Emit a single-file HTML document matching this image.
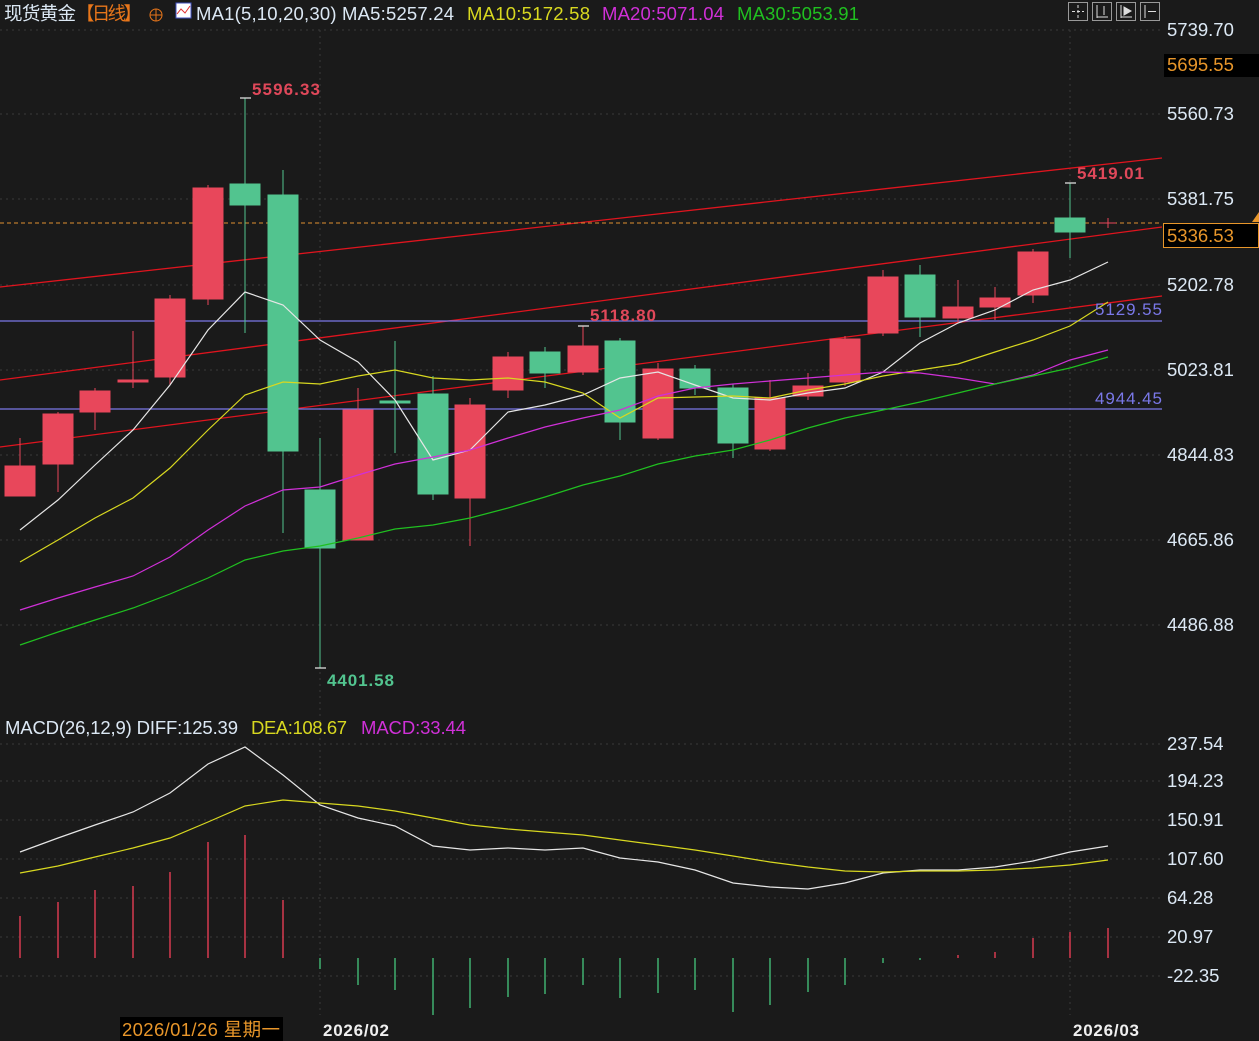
<!DOCTYPE html><html><head><meta charset="utf-8"><style>
html,body{margin:0;padding:0;background:#1a1a1a;width:1259px;height:1041px;overflow:hidden}
svg{display:block}
text{font-family:"Liberation Sans","Noto Sans CJK SC",sans-serif;font-size:18.5px}
</style></head><body>
<svg width="1259" height="1041" viewBox="0 0 1259 1041">
<rect width="1259" height="1041" fill="#1a1a1a"/>
<g stroke="#3a3a3a" stroke-dasharray="2,4" stroke-width="1">
<line x1="0" y1="30" x2="1162" y2="30"/><line x1="0" y1="114" x2="1162" y2="114"/>
<line x1="0" y1="199" x2="1162" y2="199"/><line x1="0" y1="285" x2="1162" y2="285"/>
<line x1="0" y1="370" x2="1162" y2="370"/><line x1="0" y1="455" x2="1162" y2="455"/>
<line x1="0" y1="540" x2="1162" y2="540"/><line x1="0" y1="625" x2="1162" y2="625"/>
<line x1="0" y1="744" x2="1162" y2="744"/><line x1="0" y1="781" x2="1162" y2="781"/>
<line x1="0" y1="820" x2="1162" y2="820"/><line x1="0" y1="859" x2="1162" y2="859"/>
<line x1="0" y1="898" x2="1162" y2="898"/><line x1="0" y1="937" x2="1162" y2="937"/>
<line x1="0" y1="976" x2="1162" y2="976"/>
<line x1="320" y1="30" x2="320" y2="1015"/><line x1="1070" y1="30" x2="1070" y2="1015"/>
</g>
<g stroke="#e0141e" stroke-width="1.3">
<line x1="0" y1="287" x2="1162" y2="158"/>
<line x1="0" y1="380" x2="1162" y2="227"/>
<line x1="0" y1="447" x2="1162" y2="296"/>
</g>
<g stroke="#7a78e8" stroke-width="1.2"><line x1="0" y1="321" x2="1162" y2="321"/><line x1="0" y1="409" x2="1162" y2="409"/></g>
<line x1="0" y1="223" x2="1162" y2="223" stroke="#e09030" stroke-dasharray="4,3" stroke-width="1"/>
<g>
<g stroke="#e8475b" fill="#e8475b">
<line x1="20" y1="438" x2="20" y2="496"/><rect x="5" y="466" width="30" height="30"/>
<line x1="58" y1="412" x2="58" y2="492"/><rect x="43" y="414" width="30" height="50"/>
<line x1="95" y1="388" x2="95" y2="430"/><rect x="80" y="391" width="30" height="21"/>
<line x1="133" y1="331" x2="133" y2="388"/><rect x="118" y="380" width="30" height="2"/>
<line x1="170" y1="295" x2="170" y2="385"/><rect x="155" y="299" width="30" height="78"/>
<line x1="208" y1="185" x2="208" y2="305"/><rect x="193" y="188" width="30" height="111"/>
<line x1="358" y1="388" x2="358" y2="540"/><rect x="343" y="410" width="30" height="130"/>
<line x1="470" y1="398" x2="470" y2="546"/><rect x="455" y="405" width="30" height="93"/>
<line x1="508" y1="352" x2="508" y2="398"/><rect x="493" y="357" width="30" height="33"/>
<line x1="583" y1="326" x2="583" y2="375"/><rect x="568" y="346" width="30" height="26"/>
<line x1="658" y1="363" x2="658" y2="440"/><rect x="643" y="369" width="30" height="69"/>
<line x1="770" y1="380" x2="770" y2="451"/><rect x="755" y="398" width="30" height="51"/>
<line x1="808" y1="373" x2="808" y2="400"/><rect x="793" y="386" width="30" height="10"/>
<line x1="845" y1="336" x2="845" y2="386"/><rect x="830" y="339" width="30" height="43"/>
<line x1="883" y1="270" x2="883" y2="336"/><rect x="868" y="277" width="30" height="56"/>
<line x1="958" y1="280" x2="958" y2="322"/><rect x="943" y="307" width="30" height="11"/>
<line x1="995" y1="287" x2="995" y2="320"/><rect x="980" y="298" width="30" height="9"/>
<line x1="1033" y1="249" x2="1033" y2="303"/><rect x="1018" y="252" width="30" height="43"/>
</g>
<g stroke="#52c48f" fill="#52c48f">
<line x1="245" y1="98" x2="245" y2="333"/><rect x="230" y="184" width="30" height="21"/>
<line x1="283" y1="170" x2="283" y2="533"/><rect x="268" y="195" width="30" height="256"/>
<line x1="320" y1="438" x2="320" y2="668"/><rect x="305" y="490" width="30" height="58"/>
<line x1="395" y1="341" x2="395" y2="453"/><rect x="380" y="401" width="30" height="2"/>
<line x1="433" y1="376" x2="433" y2="500"/><rect x="418" y="394" width="30" height="100"/>
<line x1="545" y1="347" x2="545" y2="388"/><rect x="530" y="352" width="30" height="21"/>
<line x1="620" y1="338" x2="620" y2="440"/><rect x="605" y="341" width="30" height="81"/>
<line x1="695" y1="365" x2="695" y2="395"/><rect x="680" y="369" width="30" height="19"/>
<line x1="733" y1="384" x2="733" y2="458"/><rect x="718" y="388" width="30" height="55"/>
<line x1="920" y1="265" x2="920" y2="337"/><rect x="905" y="275" width="30" height="42"/>
<line x1="1070" y1="183" x2="1070" y2="258"/><rect x="1055" y="218" width="30" height="14"/>
</g>
<g stroke="#ddd" stroke-width="1.3"><line x1="240" y1="98" x2="251" y2="98"/><line x1="315" y1="668" x2="326" y2="668"/><line x1="578" y1="326" x2="589" y2="326"/><line x1="1065" y1="183" x2="1076" y2="183"/></g>
<line x1="1100" y1="223" x2="1116" y2="223" stroke="#e8475b"/><line x1="1108" y1="218" x2="1108" y2="228" stroke="#e8475b"/>
</g>
<g fill="none" stroke-width="1.2">
<polyline stroke="#e6e6e6" points="20,530 58,500 95,465 133,430 170,385 208,330 245,292 283,305 320,340 358,362 395,400 433,460 470,450 508,412 545,405 583,395 620,378 658,372 695,385 733,398 770,400 808,393 845,388 883,372 920,343 958,323 995,310 1033,290 1070,280 1108,262"/>
<polyline stroke="#d8d820" points="20,562 58,540 95,518 133,498 170,468 208,430 245,395 283,382 320,384 358,376 395,370 433,378 470,380 508,378 545,382 583,393 620,418 658,398 695,397 733,396 770,398 808,390 845,384 883,376 920,370 958,364 995,352 1033,340 1070,326 1108,302"/>
<polyline stroke="#d030d8" points="20,610 58,598 95,587 133,576 170,557 208,530 245,506 283,490 320,487 358,475 395,464 433,457 470,450 508,438 545,427 583,418 620,410 658,396 695,388 733,384 770,381 808,378 845,375 883,372 920,373 958,378 995,384 1033,375 1070,360 1108,350"/>
<polyline stroke="#20c020" points="20,645 58,632 95,620 133,608 170,594 208,578 245,560 283,551 320,546 358,538 395,529 433,525 470,518 508,508 545,497 583,485 620,476 658,464 695,456 733,450 770,440 808,428 845,418 883,410 920,402 958,393 995,384 1033,376 1070,368 1108,357"/>
</g>
<g stroke="#d63a50" stroke-width="1.5">
<line x1="20" y1="916" x2="20" y2="958"/><line x1="58" y1="902" x2="58" y2="958"/><line x1="95" y1="890" x2="95" y2="958"/><line x1="133" y1="886" x2="133" y2="958"/><line x1="170" y1="872" x2="170" y2="958"/><line x1="208" y1="842" x2="208" y2="958"/><line x1="245" y1="835" x2="245" y2="958"/><line x1="283" y1="900" x2="283" y2="958"/>
<line x1="958" y1="955" x2="958" y2="958"/><line x1="995" y1="952" x2="995" y2="958"/><line x1="1033" y1="938" x2="1033" y2="958"/><line x1="1070" y1="932" x2="1070" y2="958"/><line x1="1108" y1="928" x2="1108" y2="958"/>
</g>
<g stroke="#3fb070" stroke-width="1.5">
<line x1="320" y1="958" x2="320" y2="969"/><line x1="358" y1="958" x2="358" y2="985"/><line x1="395" y1="958" x2="395" y2="990"/><line x1="433" y1="958" x2="433" y2="1015"/><line x1="470" y1="958" x2="470" y2="1008"/><line x1="508" y1="958" x2="508" y2="997"/><line x1="545" y1="958" x2="545" y2="994"/><line x1="583" y1="958" x2="583" y2="985"/><line x1="620" y1="958" x2="620" y2="998"/><line x1="658" y1="958" x2="658" y2="993"/><line x1="695" y1="958" x2="695" y2="990"/><line x1="733" y1="958" x2="733" y2="1012"/><line x1="770" y1="958" x2="770" y2="1005"/><line x1="808" y1="958" x2="808" y2="992"/><line x1="845" y1="958" x2="845" y2="985"/><line x1="883" y1="958" x2="883" y2="963"/><line x1="920" y1="958" x2="920" y2="960"/>
</g>
<g fill="none" stroke-width="1.2">
<polyline stroke="#e6e6e6" points="20,852 58,838 95,825 133,812 170,793 208,764 245,747 283,775 320,805 358,818 395,826 433,846 470,850 508,848 545,850 583,848 620,858 658,862 695,870 733,883 770,887 808,889 845,883 883,873 920,870 958,870 995,867 1033,861 1070,852 1108,846"/>
<polyline stroke="#d8d820" points="20,873 58,866 95,857 133,848 170,838 208,822 245,806 283,800 320,803 358,806 395,811 433,818 470,825 508,829 545,832 583,835 620,840 658,845 695,850 733,856 770,862 808,867 845,871 883,872 920,871 958,871 995,870 1033,868 1070,865 1108,860"/>
</g>
<text x="252" y="95" fill="#e0485a" style="font-size:17px;font-weight:bold" textLength="68">5596.33</text>
<text x="1077" y="179" fill="#e0485a" style="font-size:17px;font-weight:bold" textLength="67">5419.01</text>
<text x="590" y="321" fill="#e0485a" style="font-size:17px;font-weight:bold" textLength="66">5118.80</text>
<text x="327" y="686" fill="#52c48f" style="font-size:17px;font-weight:bold" textLength="67">4401.58</text>
<text x="1095" y="315" fill="#7a78e8" style="font-size:17px" textLength="67">5129.55</text>
<text x="1095" y="404" fill="#7a78e8" style="font-size:17px" textLength="67">4944.45</text>
<g fill="#dce8f4">
<text x="1167" y="36">5739.70</text><text x="1167" y="120">5560.73</text><text x="1167" y="205">5381.75</text>
<text x="1167" y="291">5202.78</text><text x="1167" y="376">5023.81</text><text x="1167" y="461">4844.83</text>
<text x="1167" y="546">4665.86</text><text x="1167" y="631">4486.88</text>
<text x="1167" y="750">237.54</text><text x="1167" y="787">194.23</text><text x="1167" y="826">150.91</text>
<text x="1167" y="865">107.60</text><text x="1167" y="904">64.28</text><text x="1167" y="943">20.97</text>
<text x="1167" y="982">-22.35</text>
</g>
<rect x="1164" y="54" width="95" height="23" fill="#000"/>
<text x="1167" y="71" fill="#e8962a">5695.55</text>
<rect x="1163.5" y="223.5" width="95" height="24" fill="#000" stroke="#e8962a"/>
<text x="1167" y="242" fill="#e8962a">5336.53</text>
<path d="M1252 222 L1259 212 L1259 222Z" fill="#e8962a"/>
<text x="4" y="20" fill="#dce8f4" textLength="72">现货黄金</text>
<text x="76" y="20" fill="#e8761a" textLength="66">【日线】</text>
<circle cx="156" cy="15" r="6" fill="none" stroke="#e8761a"/><line x1="150" y1="15" x2="162" y2="15" stroke="#e8761a"/><line x1="156" y1="9" x2="156" y2="21" stroke="#e8761a"/>
<rect x="176" y="3" width="15" height="15" fill="#fff" stroke="#4050c0"/><polyline points="177,14 181,9 185,13 190,6" fill="none" stroke="#e03030"/>
<text x="196" y="20" fill="#dce8f4" textLength="258">MA1(5,10,20,30) MA5:5257.24</text>
<text x="467" y="20" fill="#d8d820" textLength="123">MA10:5172.58</text>
<text x="602" y="20" fill="#d030d8" textLength="122">MA20:5071.04</text>
<text x="737" y="20" fill="#20c020" textLength="122">MA30:5053.91</text>
<g fill="none" stroke="#999"><rect x="1068.5" y="2.5" width="19" height="18"/><rect x="1092.5" y="2.5" width="19" height="18"/><rect x="1116.5" y="2.5" width="19" height="18"/><rect x="1140.5" y="2.5" width="19" height="18"/></g>
<g stroke="#ddd"><line x1="1072" y1="11.5" x2="1084" y2="11.5" stroke-dasharray="3,2"/><line x1="1078" y1="5" x2="1078" y2="18" stroke-dasharray="3,2"/>
<line x1="1097" y1="5" x2="1097" y2="18"/><line x1="1097" y1="17" x2="1108" y2="17"/><line x1="1104" y1="6" x2="1104" y2="15"/>
<line x1="1121" y1="5" x2="1121" y2="18"/><line x1="1121" y1="17" x2="1132" y2="17"/><path d="M1124 7 L1131 11 L1124 15Z" fill="#ddd"/>
<line x1="1145" y1="5" x2="1145" y2="18"/><line x1="1148" y1="11.5" x2="1156" y2="11.5"/></g>
<text x="5" y="734" fill="#dce8f4" textLength="233">MACD(26,12,9) DIFF:125.39</text>
<text x="251" y="734" fill="#d8d820" textLength="96">DEA:108.67</text>
<text x="361" y="734" fill="#d030d8" textLength="105">MACD:33.44</text>
<rect x="120" y="1017" width="163" height="24" fill="#000"/>
<text x="122" y="1036" fill="#e8962a" textLength="158">2026/01/26 星期一</text>
<text x="323" y="1036" fill="#f0f0f0" style="font-weight:bold;font-size:17px" textLength="66">2026/02</text>
<text x="1073" y="1036" fill="#f0f0f0" style="font-weight:bold;font-size:17px" textLength="66">2026/03</text>
</svg>
</body></html>
